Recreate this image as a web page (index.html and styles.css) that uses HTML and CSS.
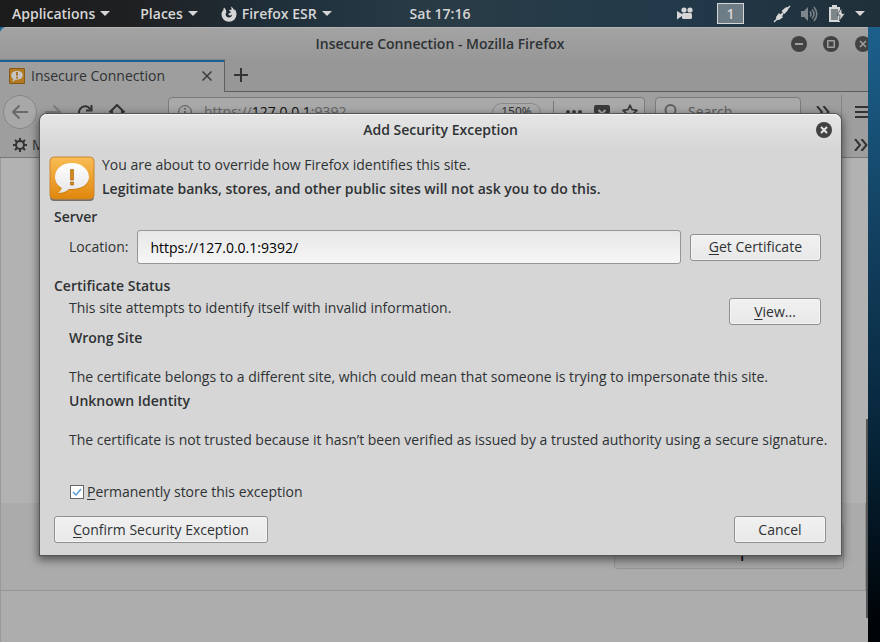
FILE: index.html
```html
<!DOCTYPE html>
<html lang="en">

<head>
  <meta charset="utf-8">
  <title>Insecure Connection - Mozilla Firefox</title>
  <link rel="stylesheet" href="styles.css">
</head>

<body>

  <header class="topbar">
    <button class="menu menu-apps">Applications <span class="caret"></span></button>
    <button class="menu menu-places">Places <span class="caret"></span></button>
    <button class="menu">
      <svg class="fox" viewBox="0 0 16 16" width="16" height="16">
        <path fill="#d6d6d6" d="M3 1.500C2.500 2.600 2.400 3.200 2.500 4C1.200 5.300.5 6.800.5 8.500a7.500 7.300 0 0 0 15 0c0-2.300-.6-4-1.800-5.300l-.2 1.300C12.800 3 11.500 1.500 9.700.5c.8 1.200 1 2.300.7 3.500C9.300 3.600 8.500 4 8 4.800L10 6c-.4.9-1.400 1.200-2.200 1.300L7.400 8.700C8.500 10 10.200 9.400 11 8.500c0 1.800-1.300 3-3 3C5.800 11.500 4.600 10 4.600 8.200c0-.8.3-1.400.8-1.800L5 4.400 4.600 3.300z"/>
      </svg>
      Firefox ESR <span class="caret"></span>
    </button>
    <time class="clock">Sat 17:16</time>
    <div class="tray">
      <svg viewBox="0 0 16 13" width="16" height="13" fill="#d6d6d6">
        <circle cx="7" cy="3" r="2.600"/><circle cx="13" cy="3" r="2.600"/>
        <rect x="5" y="6" width="10" height="6" rx="1.500"/><path d="M0 4l5 3v2l-5 3.500z"/>
      </svg>
      <button class="workspace">1</button>
      <svg viewBox="0 0 18 18" width="18" height="18" fill="#d6d6d6" stroke="#d6d6d6">
        <path stroke-width="1.500" d="M1 17L17 1"/>
        <path stroke="none" d="M8.500 6l4-3.500 3-.5-.5 3-3.500 4zM3 12l3-4 1.500 1.500L9 8.200l1.500 1.500L9 11l1 1.200-3.500 2.600-3 .5z"/>
      </svg>
      <svg class="volume" viewBox="0 0 17 16" width="17" height="16" fill="none" stroke="#7d868b" stroke-width="1.500">
        <path fill="#7d868b" stroke="none" d="M0 5h3l4-4v14l-4-4H0z"/>
        <path d="M9 5.500q2 2.500 0 5M11 3.500q4 4.500 0 9M13 1q5.500 7 0 14"/>
      </svg>
      <svg class="battery" viewBox="0 0 16 17" width="16" height="17">
        <path fill="#d6d6d6" d="M3 2V0h5v2h3v15H0V2z"/>
        <path fill="#7d868b" d="M2 4h7v11H2z"/>
        <path fill="#d6d6d6" stroke="#26343d" stroke-width=".7" d="M12.500 3L8 10h3l-.5 6L16 8.500h-3z"/>
      </svg>
      <span class="caret"></span>
    </div>
  </header>

  <main class="browser">
    <div class="titlebar">
      <h1 class="title">Insecure Connection - Mozilla Firefox</h1>
      <div class="window-buttons">
        <button class="round" aria-label="Minimize">
          <svg viewBox="0 0 16 16" width="16" height="16"><path stroke="#a0a0a0" stroke-width="2" d="M4 8h8"/></svg>
        </button>
        <button class="round" aria-label="Maximize">
          <svg viewBox="0 0 16 16" width="16" height="16"><path fill="#777" stroke="#a0a0a0" d="M4.500 4.500h7v7h-7z"/><path fill="#424242" d="M6 6h4v4H6z"/></svg>
        </button>
        <button class="round" aria-label="Close">
          <svg viewBox="0 0 16 16" width="16" height="16"><path stroke="#a0a0a0" stroke-width="1.500" d="M5 5l6 6M11 5l-6 6"/></svg>
        </button>
      </div>
    </div>

    <div class="tabs">
      <div class="tab">
        <svg viewBox="0 0 44 44" width="16" height="16">
          <rect x="1" y="1" width="42" height="42" rx="5" fill="#b37a22" stroke="#855813" stroke-width="3"/>
          <path fill="#c5c5c5" d="M22 8C12 8 6 13 6 20c0 5 2 8 6 10q-1 4-4 7 6-1 10-5C30 33 38 28 38 20S32 8 22 8z"/>
          <path stroke="#a46b16" stroke-width="5" d="M22 11v10M22 24v5"/>
        </svg>
        <span class="tab-title">Insecure Connection</span>
        <button class="plain" aria-label="Close tab">
          <svg viewBox="0 0 10 10" width="10" height="10"><path stroke="#3b3b3b" stroke-width="1.500" d="M.5.5l9 9M9.500.5l-9 9"/></svg>
        </button>
      </div>
      <button class="plain new-tab" aria-label="New tab">
        <svg viewBox="0 0 14 14" width="14" height="14"><path stroke="#333" stroke-width="2" d="M7 0v14M0 7h14"/></svg>
      </button>
    </div>

    <div class="toolbar">
      <button class="back" aria-label="Back">
        <svg viewBox="0 0 16 16" width="16" height="16" fill="none" stroke="#6a6a6a" stroke-width="2"><path d="M1 8h15M7.500 1.500L1 8l6.500 6.500"/></svg>
      </button>
      <div class="nav-buttons">
        <button class="plain" aria-label="Forward">
          <svg viewBox="0 0 16 16" width="16" height="16" fill="none" stroke="#7d7d7d" stroke-width="2"><path d="M0 8h15M8.500 1.500L15 8l-6.500 6.500"/></svg>
        </button>
        <button class="plain" aria-label="Reload">
          <svg viewBox="0 0 16 16" width="16" height="16" fill="none" stroke="#333" stroke-width="2"><path d="M13 5A6 6 0 1 0 14 9M14.500 1v5.500H9"/></svg>
        </button>
        <button class="plain" aria-label="Home">
          <svg viewBox="0 0 16 16" width="16" height="16" fill="none" stroke="#333" stroke-width="2"><path d="M.5 8.500L8 1l7.500 7.500M3 7v8h10V7M8 15V9"/></svg>
        </button>
      </div>
      <div class="field urlbar">
        <svg viewBox="0 0 14 14" width="14" height="14" fill="none" stroke="#555"><circle cx="7" cy="7" r="6.400"/><path stroke-width="1.500" d="M7 6v5M7 3v1.500"/></svg>
        <a class="url" href="https://127.0.0.1:9392">https://<b>127.0.0.1</b>:9392</a>
        <button class="zoom">150%</button>
        <span class="divider"></span>
        <button class="plain" aria-label="Page actions">
          <svg viewBox="0 0 16 16" width="16" height="16" fill="#3b3b3b"><circle cx="2" cy="8" r="2"/><circle cx="8" cy="8" r="2"/><circle cx="14" cy="8" r="2"/></svg>
        </button>
        <button class="plain" aria-label="Save to Pocket">
          <svg viewBox="0 0 16 16" width="16" height="16"><path fill="#3b3b3b" d="M2 1h12q2 0 2 2v4a8 8 0 0 1-16 0V3q0-2 2-2z"/><path fill="none" stroke="#a8a8a8" stroke-width="2" d="M4.500 6L8 9.500 11.500 6"/></svg>
        </button>
        <button class="plain" aria-label="Bookmark">
          <svg viewBox="0 0 16 16" width="16" height="16"><path fill="none" stroke="#3b3b3b" stroke-width="1.700" stroke-linejoin="round" d="M8 1.200l2 4.500 5 .6-3.700 3.300 1 5L8 12.200l-4.300 2.400 1-5L1 6.300l5-.6z"/></svg>
        </button>
      </div>
      <div class="field search">
        <svg viewBox="0 0 16 16" width="16" height="16" fill="none" stroke="#606060" stroke-width="2"><circle cx="6.500" cy="6" r="5"/><path d="M10 10l5 5"/></svg>
        <input class="search-input" type="text" placeholder="Search" aria-label="Search">
      </div>
      <button class="plain more" aria-label="More tools">
        <svg viewBox="0 0 14 12" width="14" height="12" fill="none" stroke="#333" stroke-width="2"><path d="M1 0l5 6-5 6M7.500 0l5 6-5 6"/></svg>
      </button>
      <button class="plain hamburger" aria-label="Open menu">
        <svg viewBox="0 0 14 12" width="14" height="12" stroke="#333" stroke-width="2"><path d="M0 1h14M0 6h14M0 11h14"/></svg>
      </button>
    </div>

    <div class="bookmarks">
      <button class="plain bookmark">
        <svg viewBox="0 0 14 14" width="14" height="14" fill="none" stroke="#333"><circle cx="7" cy="7" r="4" stroke-width="2"/><path stroke-width="2" d="M7 0v3M7 11v3M0 7h3M11 7h3M2 2l2 2M10 10l2 2M12 2l-2 2M4 10l-2 2"/></svg>
        Most Visited
      </button>
      <button class="plain" aria-label="More bookmarks">
        <svg viewBox="0 0 14 12" width="14" height="12" fill="none" stroke="#333" stroke-width="2"><path d="M1 0l5 6-5 6M7.500 0l5 6-5 6"/></svg>
      </button>
    </div>

    <div class="page">
      <div class="page-footer">
        <button class="add-exception">Add Exception...</button>
      </div>
      <div class="scroll-thumb"></div>
    </div>
  </main>

  <section class="dialog" role="dialog" aria-labelledby="dialog-title">
    <div class="dialog-header">
      <h2 class="title" id="dialog-title">Add Security Exception</h2>
      <button class="round dialog-close" aria-label="Close dialog">
        <svg viewBox="0 0 16 16" width="16" height="16"><path stroke="#e6e6e6" stroke-width="2" d="M5 5l6 6M11 5l-6 6"/></svg>
      </button>
    </div>

    <div class="intro">
      <svg viewBox="0 0 46 46" width="46" height="46">
        <defs>
          <linearGradient id="orange" x2="0" y2="1"><stop stop-color="#f9bd55"/><stop offset="1" stop-color="#e0870c"/></linearGradient>
          <linearGradient id="bubble" x2="0" y2="1"><stop stop-color="#fff"/><stop offset="1" stop-color="#e6e6e6"/></linearGradient>
        </defs>
        <rect x="1" y="2" width="44" height="43" rx="4" fill="#77706a"/>
        <rect x="1" y="1" width="44" height="42" rx="4" fill="url(#orange)" stroke="#c98732"/>
        <path fill="#b96f0e" opacity=".6" d="M23 8C13 8 6 14 6 22c0 5 3 9 7 11q-1 3-4 5 7 0 11-4h3c10 0 17-5 17-12S33 8 23 8z"/>
        <path fill="url(#bubble)" d="M23 7C13 7 6 13 6 21c0 5 3 9 7 11q-1 3-4 5 7 0 11-4h3c10 0 17-5 17-12S33 7 23 7z"/>
        <path fill="#d98a1c" stroke="#a9690f" stroke-width=".7" d="M21.500 13.500h3V24h-3zM21.500 26h3v3h-3z"/>
      </svg>
      <div class="intro-text">
        <p class="line">You are about to override how Firefox identifies this site.</p>
        <p class="line"><strong>Legitimate banks, stores, and other public sites will not ask you to do this.</strong></p>
      </div>
    </div>

    <form class="exception-form">
      <h3 class="heading">Server</h3>
      <div class="server">
        <label for="location">Location:</label>
        <input class="location" type="text" id="location" value="https://127.0.0.1:9392/">
        <button class="btn" type="button"><u>G</u>et Certificate</button>
      </div>

      <h3 class="heading">Certificate Status</h3>
      <div class="status">
        <p class="line">This site attempts to identify itself with invalid information.</p>
        <button class="btn view" type="button"><u>V</u>iew...</button>
      </div>
      <div class="reasons">
        <h4 class="heading">Wrong Site</h4>
        <p class="reason">The certificate belongs to a different site, which could mean that someone is trying to impersonate this site.</p>
        <h4 class="heading">Unknown Identity</h4>
        <p class="reason">The certificate is not trusted because it hasn’t been verified as issued by a trusted authority using a secure signature.</p>
      </div>

      <div class="store">
        <input class="check" type="checkbox" id="permanent" checked>
        <label for="permanent"><u>P</u>ermanently store this exception</label>
      </div>

      <div class="actions">
        <button class="btn" type="submit"><u>C</u>onfirm Security Exception</button>
        <button class="btn" type="button">Cancel</button>
      </div>
    </form>
  </section>

</body>

</html>
```
FILE: styles.css
```css
* {
  box-sizing: border-box;
}

body {
  font-family: "Open Sans", "Noto Sans", sans-serif;
  font-size: 14px;
  line-height: 24px;
  color: #2e3234;
  margin: 0;
  min-height: 100vh;
  display: flex;
  flex-direction: column;
  position: relative;
  overflow: hidden;
  background: linear-gradient(170deg, #1d6796 5%, #1b5e89 25%, #123f5e 50%, #062438 75%, #000408 97%);
}

h1, h2, h3, h4, p {
  margin: 0;
  font-size: 14px;
}

h1, h2, h3, h4, strong {
  font-weight: 600;
}

button,
input {
  font: inherit;
  color: inherit;
}

button {
  padding: 0;
  border: none;
  background: none;
}

svg {
  display: block;
  flex: none;
}

u {
  text-underline-offset: 2px;
}

/* top bar */

.topbar {
  display: flex;
  align-items: center;
  height: 27px;
  padding: 0 15px 0 12px;
  position: relative;
  color: #d6d6d6;
  font-weight: 600;
  background: linear-gradient(90deg, #1c1c1c 0%, #1f2022 15%, #1f303b 32%, #293c46 50%, #22394a 78%, #202f38 100%);
}

.menu {
  display: flex;
  align-items: center;
  gap: 5px;
}

.menu-apps {
  margin-right: 30px;
}

.menu-places {
  margin-right: 23px;
}

.caret {
  border: 5px solid transparent;
  border-top-color: #d6d6d6;
  border-bottom: none;
}

.clock {
  position: absolute;
  left: 50%;
  transform: translateX(-50%);
}

.tray {
  display: flex;
  align-items: center;
  margin-left: auto;
}

.workspace {
  width: 27px;
  height: 21px;
  margin: 0 29px 0 24px;
  border: 1px solid #d6d6d6;
  background: #6e7c85;
  line-height: 19px;
}

.volume {
  margin: 0 11px 0 10px;
}

.battery {
  margin-right: 10px;
}

/* browser window */

.browser {
  flex: 1;
  display: flex;
  flex-direction: column;
  margin-right: 12px;
  overflow: hidden;
  border-radius: 7px 0 0 0;
  background: #adadad;
}

.titlebar {
  display: flex;
  height: 32px;
  align-items: center;
  position: relative;
  border-top: 1px solid #b3b3b3;
  background: linear-gradient(#a3a3a3, #989898);
}

.title {
  flex: 1;
  text-align: center;
}

.titlebar .title {
  padding-left: 12px;
}

.window-buttons {
  position: absolute;
  right: -3px;
  display: flex;
  gap: 16px;
}

.round {
  width: 16px;
  height: 16px;
  border-radius: 50%;
  background: #424242;
}

.tabs {
  display: flex;
  height: 33px;
  background: #979797;
}

.tab {
  display: flex;
  align-items: center;
  width: 225px;
  padding: 0 12px 0 9px;
  border-top: 1px solid #858585;
  border-right: 1px solid #606060;
  background: #9e9e9e;
  box-shadow: inset 0 2px #17639a;
}

.tab-title {
  flex: 1;
  margin-left: 6px;
}

.plain {
  display: flex;
  align-items: center;
}

.new-tab {
  flex: 1;
  padding-left: 9px;
  border-bottom: 1px solid #5c5c5c;
}

.toolbar {
  display: flex;
  align-items: center;
  height: 40px;
  padding-left: 3px;
  background: #9e9e9e;
}

.back {
  display: flex;
  align-items: center;
  justify-content: center;
  width: 34px;
  height: 34px;
  border: 1px solid #868686;
  border-radius: 50%;
  background: #a8a8a8;
}

.nav-buttons {
  display: flex;
  gap: 16px;
  margin: 0 43px 0 8px;
}

.field {
  display: flex;
  align-items: center;
  height: 30px;
  border: 1px solid #7b7b7b;
  border-radius: 4px;
  background: #a9a9a9;
}

.urlbar {
  flex: 1;
  gap: 12px;
  padding: 0 6px 0 9px;
}

.url {
  flex: 1;
  color: #666;
  text-decoration: none;
}

.url b {
  font-weight: normal;
  color: #111;
}

.zoom {
  width: 49px;
  height: 19px;
  border: 1px solid #898989;
  border-radius: 10px;
  font-size: 12px;
  line-height: 16px;
}

.divider {
  width: 1px;
  height: 22px;
  background: #777;
}

.search {
  width: 146px;
  margin-left: 10px;
  padding: 0 8px;
  gap: 6px;
}

.search-input {
  width: 100%;
  border: none;
  background: none;
}

.search-input::placeholder {
  color: #5c5c5c;
}

.more {
  margin: 0 11px 0 15px;
}

.hamburger {
  height: 34px;
  padding-left: 13px;
  border-left: 1px solid #858585;
  margin-right: -1px;
}

.bookmarks {
  display: flex;
  align-items: center;
  justify-content: space-between;
  height: 26px;
  padding-left: 13px;
  border-bottom: 1px solid #777;
  background: #9e9e9e;
}

.bookmark {
  gap: 5px;
}

.page {
  flex: 1;
  position: relative;
  padding: 345px 2px 0 0;
  border-left: 1px solid #999;
  background: linear-gradient(#b2b2b2, #b2b2b2) top / 100% 345px no-repeat #adadad;
}

.page-footer {
  padding: 21px 21px;
  text-align: right;
  border: 1px solid #949494;
  border-width: 0 1px 1px 0;
  background: #ababab;
}

.add-exception {
  width: 230px;
  height: 45px;
  border: 1px solid #959595;
  border-radius: 3px;
  font-size: 21px;
  line-height: 24px;
  padding-top: 2px;
  color: #111;
  background: #a6a6a6;
}

.scroll-thumb {
  position: absolute;
  top: 54%;
  bottom: 5%;
  right: 0;
  width: 2px;
  background: #555;
}

/* dialog */

.dialog {
  position: absolute;
  top: 114px;
  left: 40px;
  right: 39px;
  border-radius: 7px 7px 0 0;
  background: linear-gradient(#e6e6e6, #d6d6d6 34px);
  box-shadow: 0 0 0 1px #555, 0 3px 9px 2px rgba(0, 0, 0, 0.5), inset 0 1px #f5f5f5;
}

.dialog-header {
  display: flex;
  align-items: center;
  height: 32px;
  position: relative;
}

.dialog-close {
  position: absolute;
  right: 9px;
}

.intro {
  display: flex;
  gap: 7px;
  padding: 7px 9px 0;
}

.intro svg {
  margin-top: 3px;
}

.exception-form {
  padding: 3px 15px 12px 14px;
}

.server {
  display: flex;
  align-items: center;
  gap: 9px;
  margin-bottom: 10px;
  padding: 1px 5px 0 15px;
}

.location {
  flex: 1;
  height: 34px;
  padding: 0 12px;
  border: 1px solid #969696;
  border-radius: 3px;
  background: linear-gradient(#e7e7e7, #f7f7f7);
  color: #000;
}

.btn {
  min-width: 92px;
  height: 27px;
  padding: 0 18px;
  border: 1px solid #8f8f8f;
  border-radius: 3px;
  background: linear-gradient(#f1f1f1, #e8e8e8);
  box-shadow: inset 0 0 0 1px #f5f5f5;
}

.status {
  display: flex;
  justify-content: space-between;
  height: 28px;
  padding: 0 5px 0 15px;
}

.status .line {
  line-height: 20px;
}

.reasons {
  padding-left: 15px;
}

.reason {
  padding-top: 15px;
  white-space: nowrap;
}

.store {
  display: flex;
  align-items: center;
  gap: 3px;
  margin: 28px 0 12px;
  padding-left: 16px;
}

.check {
  appearance: none;
  width: 14px;
  height: 14px;
  margin: 0;
  border: 1px solid #666;
  background: #fff;
}

.check:checked {
  background: #fff url("data:image/svg+xml,%3Csvg xmlns='http://www.w3.org/2000/svg' viewBox='0 0 12 12'%3E%3Cpath d='M2 6l3 3 5-6' fill='none' stroke='%235b9bd5' stroke-width='1.500'/%3E%3C/svg%3E");
}

.actions {
  display: flex;
  justify-content: space-between;
}
```
